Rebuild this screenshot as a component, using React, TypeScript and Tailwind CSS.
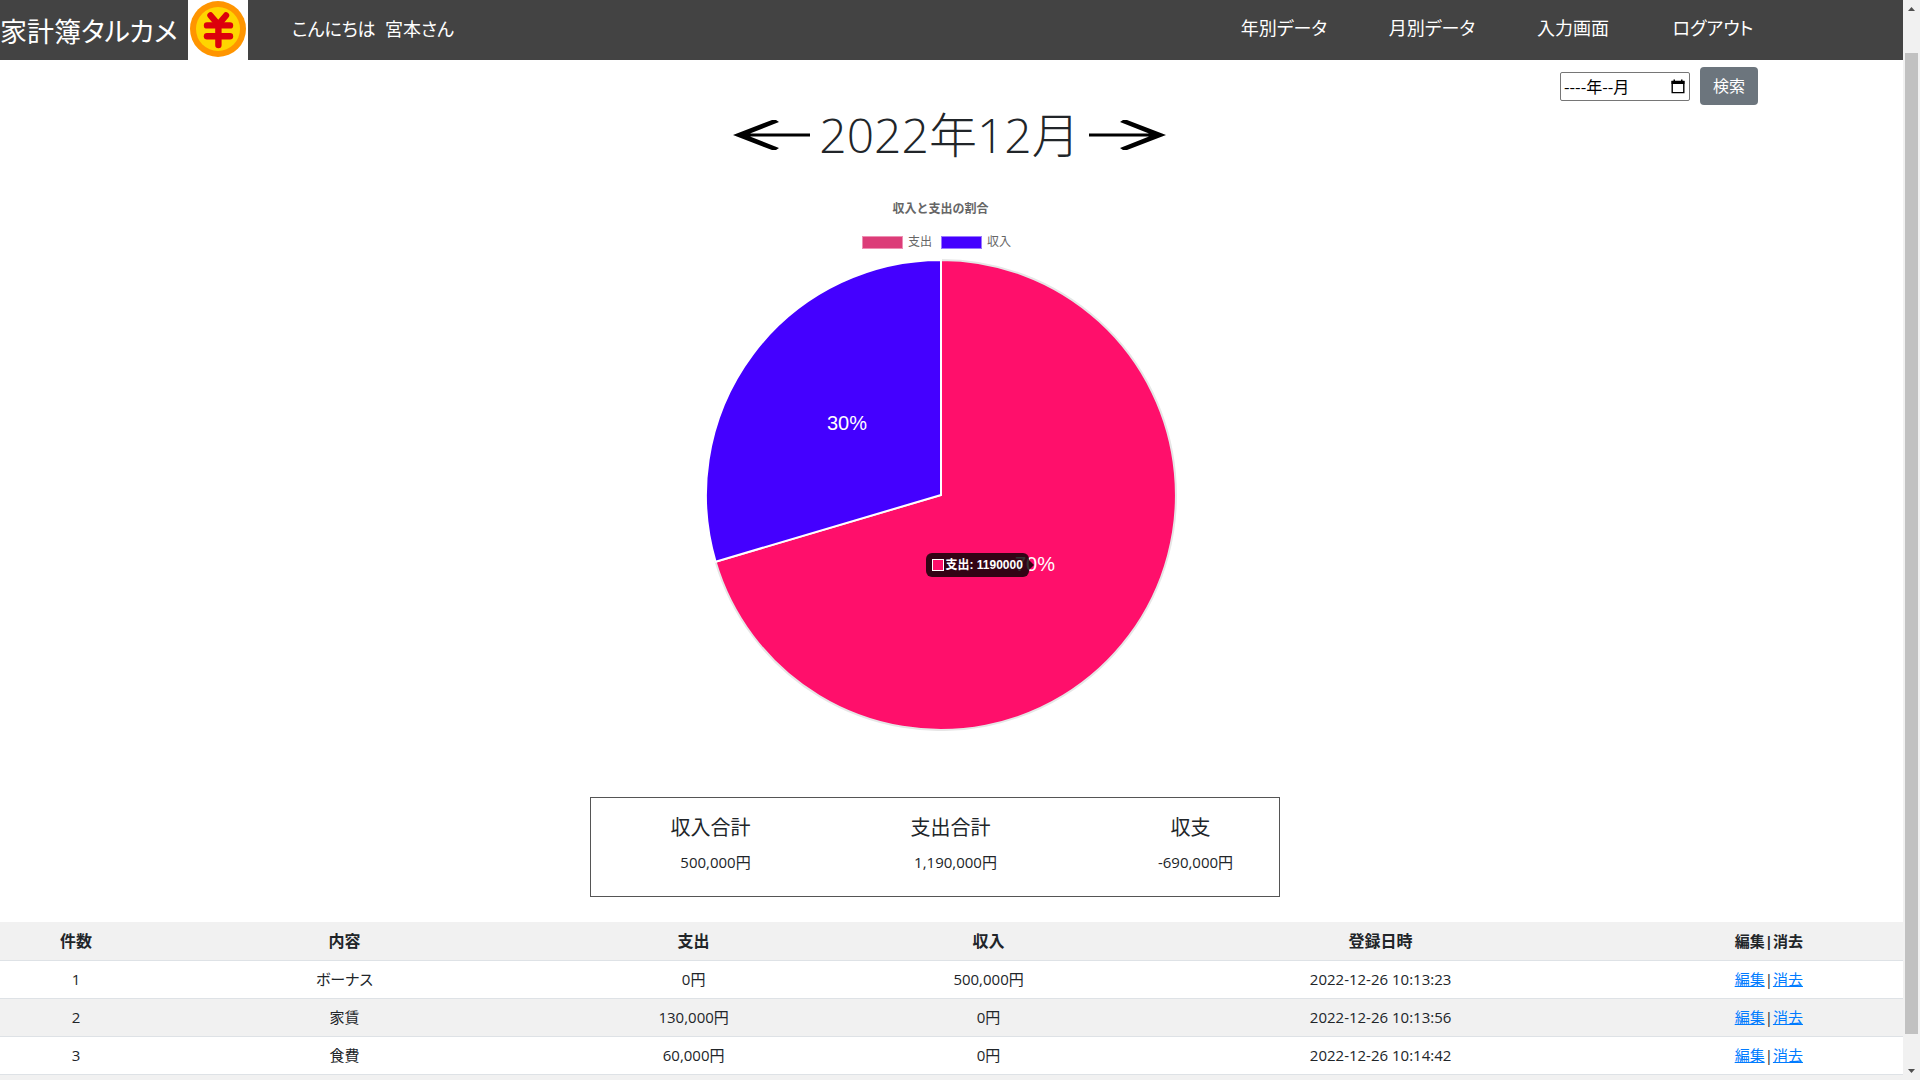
import React from "react";

const navItems = [
  { label: "年別データ", width: "w-[148px]" },
  { label: "月別データ", width: "w-[148px]" },
  { label: "入力画面", width: "w-[134px]" },
  { label: "ログアウト", width: "w-[146px]" },
];

const totals = [
  { label: "収入合計", value: "500,000円" },
  { label: "支出合計", value: "1,190,000円" },
  { label: "収支", value: "-690,000円" },
];

const headings = ["件数", "内容", "支出", "収入", "登録日時"];

const records = [
  { name: "ボーナス", out: "0円", income: "500,000円", date: "2022-12-26 10:13:23" },
  { name: "家賃", out: "130,000円", income: "0円", date: "2022-12-26 10:13:56" },
  { name: "食費", out: "60,000円", income: "0円", date: "2022-12-26 10:14:42" },
];

function CoinLogo() {
  return (
    <svg viewBox="0 0 60 60" className="h-[60px] w-[60px] shrink-0 bg-white" aria-hidden="true">
      <circle cx="30" cy="29" r="28" fill="#ff9500" />
      <circle cx="30" cy="29" r="22" fill="#ffd500" />
      <g stroke="#dc000c" strokeWidth="6.4" strokeLinecap="round" fill="none">
        <path d="M22.5 15.5 L30.3 24.5 L38 15.5" />
        <path d="M19 25.4 H42" />
        <path d="M19 36.2 H42" />
        <path d="M30.4 25 V45" />
      </g>
    </svg>
  );
}

function Arrow({ flip = false }: { flip?: boolean }) {
  return (
    <svg viewBox="0 0 78 32" className={flip ? "h-8 w-[78px] -scale-x-100" : "h-8 w-[78px]"} aria-hidden="true">
      <path d="M0 16 L39 1 H43 L46 3 L17 14.4 H77 V17.6 H17 L46 29 L43 31 H39 Z" fill="#000" />
    </svg>
  );
}

function PieChart() {
  return (
    <div className="relative h-[472px] w-[472px]">
      <svg viewBox="-236 -236 472 472" className="h-full w-full" role="img" aria-label="収入と支出の割合">
        <path d="M0 0 V-235 A235 235 0 1 1 -225.4 66.7 Z" fill="#ff0f6b" stroke="#e6e6e6" strokeWidth="2" />
        <path d="M0 0 L-225.4 66.7 A235 235 0 0 1 0 -235 Z" fill="#4400ff" stroke="#fff" strokeWidth="2" />
        <g fill="#fff" fontSize="20" textAnchor="middle" className="font-['Liberation_Sans',sans-serif]">
          <text x="-94" y="-65">30%</text>
          <text x="94" y="76">70%</text>
        </g>
      </svg>
      <div className="absolute top-[294px] left-[221px] flex h-6 w-[103px] items-center gap-0.5 rounded-md bg-black/80 pl-1.5 font-['Liberation_Sans','Noto_Sans_CJK_JP',sans-serif] text-xs font-bold whitespace-nowrap text-white">
        <span className="h-3 w-3 shrink-0 border border-white bg-[#ff0f6b]" />
        支出: 1190000
        <span className="absolute top-[7px] left-full border-y-5 border-l-5 border-y-transparent border-l-black/80" />
      </div>
    </div>
  );
}

function LegendItem({ label, swatch }: { label: string; swatch: string }) {
  return (
    <li className="flex items-center gap-[5px]">
      <span className={swatch} />
      {label}
    </li>
  );
}

export default function App() {
  return (
    <div className="flex h-screen overflow-hidden bg-white font-['Open_Sans','Noto_Sans_CJK_JP',sans-serif] text-[#212529] [font-feature-settings:'palt']">
      <div className="min-w-0 flex-1">
        <header className="flex h-[60px] items-center bg-[#434343] text-white">
          <h1 className="w-[188px] shrink-0 pt-1 text-[27px] leading-10 whitespace-nowrap">家計簿タルカメ</h1>
          <CoinLogo />
          <p className="ml-11 pb-0.5 text-lg whitespace-pre">こんにちは  宮本さん</p>
          <nav className="mr-[117px] ml-auto flex pb-1 text-lg">
            {navItems.map((item) => (
              <div key={item.label} className={item.width + " text-center"}>
                <a href="#" className="whitespace-nowrap">{item.label}</a>
              </div>
            ))}
          </nav>
        </header>

        <main>
          <form className="mt-[7px] mr-[145px] flex h-[38px] items-center justify-end gap-2.5" onSubmit={(e) => e.preventDefault()}>
            <label className="flex h-[29px] w-[130px] items-center rounded-xs border border-[#767676] px-[3px]">
              <input type="text" aria-label="年月" defaultValue="----年--月" className="min-w-0 flex-1 font-['Noto_Sans_CJK_JP',sans-serif] text-base leading-6 text-black outline-none [font-feature-settings:normal]" />
              <svg viewBox="0 0 14 15" className="mr-px h-[15px] w-3.5" aria-hidden="true">
                <path d="M1.2 2.5 H12.8 V13.6 H1.2 Z" fill="none" stroke="#000" strokeWidth="1.4" />
                <path d="M0.5 2 H13.5 V5 H0.5 Z M2.5 0.5 H4 V3 H2.5 Z M10 0.5 H11.5 V3 H10 Z" fill="#000" />
              </svg>
            </label>
            <button type="submit" className="h-[38px] w-[58px] rounded bg-[#6c757d] text-base text-white">検索</button>
          </form>

          <div className="flex h-[60px] items-center justify-center gap-2 pr-1">
            <button type="button" aria-label="前の月"><Arrow /></button>
            <h2 className="text-5xl leading-[60px] font-light">2022年12月</h2>
            <button type="button" aria-label="次の月"><Arrow flip /></button>
          </div>

          <section className="flex flex-col items-center pt-[34px] pr-[22px]">
            <h3 className="font-['Liberation_Sans','Noto_Sans_CJK_JP',sans-serif] text-xs leading-5 font-bold text-[#666] [font-feature-settings:normal]">収入と支出の割合</h3>
            <ul className="mt-[13px] mr-2 mb-[7px] flex gap-[9px] text-xs leading-5 text-[#666]">
              <LegendItem label="支出" swatch="h-[13px] w-[41px] border border-[#ee8fb3] bg-[#dc3c78]" />
              <LegendItem label="収入" swatch="h-[13px] w-[41px] border border-[#9a78ff] bg-[#4400ff]" />
            </ul>
            <PieChart />
          </section>

          <section className="mt-[66px] flex justify-center pr-[34px]">
            <dl className="grid h-[100px] w-[690px] grid-cols-3 gap-20 border border-[#555] pt-4 pr-2 pl-10 text-center">
              {totals.map((t) => (
                <div key={t.label}>
                  <dt className="text-xl leading-7">{t.label}</dt>
                  <dd className="mt-2 pl-2.5 text-[15px] leading-6 whitespace-nowrap">{t.value}</dd>
                </div>
              ))}
            </dl>
          </section>

          <table className="mt-[25px] w-full table-fixed text-center text-[15px] leading-6">
            <colgroup>
              <col className="w-[8%]" />
              <col className="w-[20.2%]" />
              <col className="w-[16.5%]" />
              <col className="w-[14.5%]" />
              <col className="w-[26.7%]" />
              <col className="w-[14.1%]" />
            </colgroup>
            <thead>
              <tr className="h-[38px] border-b border-[#dee2e6] bg-[#f1f1f1]">
                {headings.map((h) => (
                  <th key={h} scope="col" className="text-base font-bold">{h}</th>
                ))}
                <th scope="col" className="font-bold">編集|消去</th>
              </tr>
            </thead>
            <tbody>
              {records.map((r, i) => (
                <tr key={r.date} className="h-[38px] border-b border-[#dee2e6] even:bg-[#f1f1f1]">
                  <td>{i + 1}</td>
                  <td>{r.name}</td>
                  <td>{r.out}</td>
                  <td>{r.income}</td>
                  <td>{r.date}</td>
                  <td>
                    <a href="#" className="text-[#007bff] underline">編集</a>|<a href="#" className="text-[#007bff] underline">消去</a>
                  </td>
                </tr>
              ))}
              <tr className="h-[38px] bg-[#f1f1f1]">
                <td colSpan={6} />
              </tr>
            </tbody>
          </table>
        </main>
      </div>

      <div className="flex w-[17px] shrink-0 flex-col items-center bg-[#f1f1f1]" aria-hidden="true">
        <svg viewBox="0 0 17 17" className="h-[17px] w-[17px]"><path d="M5 11 L8.5 7 L12 11 Z" fill="#505050" /></svg>
        <div className="mt-9 mb-[29px] w-[13px] flex-1 bg-[#c1c1c1]" />
        <svg viewBox="0 0 17 17" className="h-[17px] w-[17px]"><path d="M5 6 L8.5 10 L12 6 Z" fill="#505050" /></svg>
      </div>
    </div>
  );
}
